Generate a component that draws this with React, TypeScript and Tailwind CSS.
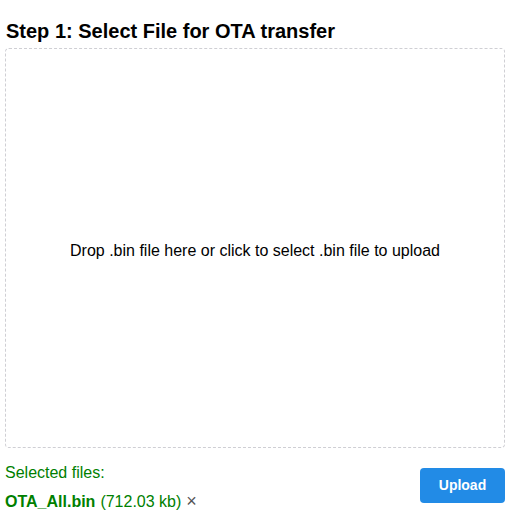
import React from 'react';

const App = () => {
  return (
    <div className="w-[516px] h-[521px] bg-white overflow-hidden font-['Liberation_Sans',Arial,sans-serif] text-black">
      <div className="pl-[5px] pr-[11px] pt-[19px]">
        {/* Step heading */}
        <h2 className="text-[20px] leading-[24px] font-bold pl-px mb-[5px]">Step 1: Select File for OTA transfer</h2>

        {/* Drop zone */}
        <div className="h-[400px] pt-[6px] border border-dashed border-[#cfcfd4] rounded-[4px] flex items-center justify-center cursor-pointer">
          <p className="text-[16px]">Drop .bin file here or click to select .bin file to upload</p>
        </div>

        {/* Selected files + upload */}
        <div className="flex justify-between items-start mt-[10px]">
          <div className="text-[16px] leading-[29px] text-[#008000]">
            <div>Selected files:</div>
            <div className="flex items-center">
              <span className="font-bold">OTA_All.bin</span>
              <span className="ml-[5px]">(712.03 kb)</span>
              <span className="ml-[5px] text-[#555] text-[18px]">×</span>
            </div>
          </div>
          <button className="mt-[10px] w-[85px] h-[35px] rounded-[4px] bg-[#228be6] text-white text-[14px] font-bold">
            Upload
          </button>
        </div>
      </div>
    </div>
  );
};

export default App;
